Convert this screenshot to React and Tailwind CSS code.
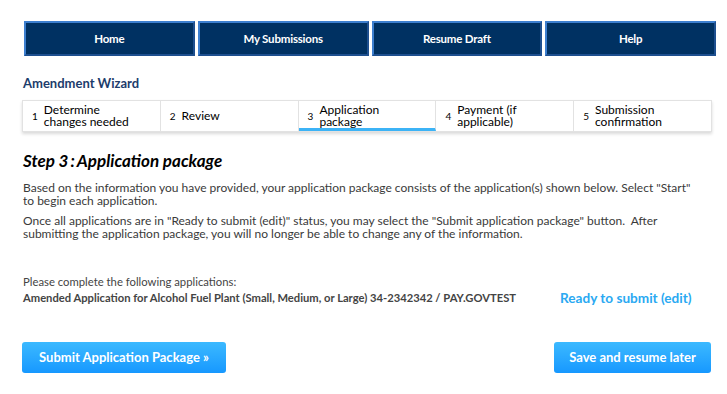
export default function App() {
  const navItems = ["Home", "My Submissions", "Resume Draft", "Help"];
  const steps = [
    ["1", "Determine", "changes needed"],
    ["2", "Review", null],
    ["3", "Application", "package"],
    ["4", "Payment (if", "applicable)"],
    ["5", "Submission", "confirmation"],
  ];
  return (
    <div className="w-[727px] h-[394px] bg-white text-[#333] overflow-hidden" style={{ fontFamily: "Lato, 'Open Sans', sans-serif" }}>
      <div className="flex gap-[3px] pl-[24px] pr-[11px] pt-[21px]">
        {navItems.map((n) => (
          <div key={n} className="flex-1 h-[35px] flex items-center justify-center bg-[#003162] border-2 border-t-[#3d7fcf] border-l-[#3d7fcf] border-r-[#1d4f8f] border-b-[#1d4f8f] text-white text-[11.5px] font-bold tracking-[-0.2px]">
            {n}
          </div>
        ))}
      </div>

      <div className="pl-[23px] pt-[19px] text-[13px] font-bold text-[#1c3c6b] leading-[16px]">Amendment Wizard</div>

      <div className="ml-[22px] mr-[15px] mt-[9px] h-[32px] flex border border-[#e2e2e2] shadow-[0_2px_3px_rgba(0,0,0,0.15)]">
        {steps.map(([num, a, b], i) => (
          <div key={num} className={`flex-1 flex items-center pl-[9px] gap-[6px] ${i < 4 ? "border-r border-[#e2e2e2]" : ""} ${i === 2 ? "border-b-[3px] border-b-[#3cb3f6] pt-[3px]" : ""}`}>
            <span className="text-[10px] text-black">{num}</span>
            <span className="text-[12px] leading-[12px] text-black">
              {a}
              {b && <br />}
              {b}
            </span>
          </div>
        ))}
      </div>

      <div className="pl-[23px] pt-[19px] text-[17px] font-bold italic text-black leading-[20px]">Step 3&#8201;:&#8201;Application package</div>

      <div className="pl-[23px] pt-[10px] text-[12px] leading-[13px] text-[#3a3a3a] whitespace-nowrap">
        <p>Based on the information you have provided, your application package consists of the application(s) shown below. Select "Start"<br />to begin each application.</p>
        <p className="mt-[7px]">Once all applications are in "Ready to submit (edit)" status, you may select the "Submit application package" button.&nbsp; After<br />submitting the application package, you will no longer be able to change any of the information.</p>
      </div>

      <div className="pl-[23px] pt-[35px] text-[11.3px] text-[#444] leading-[13px]">Please complete the following applications:</div>
      <div className="flex items-center pl-[23px] pt-[3px] leading-[14px]">
        <div className="w-[537px] text-[11.2px] font-bold text-[#444] whitespace-nowrap">Amended Application for Alcohol Fuel Plant (Small, Medium, or Large) 34-2342342 / PAY.GOVTEST</div>
        <div className="text-[13.6px] font-bold text-[#2aa9f2] whitespace-nowrap">Ready to submit (edit)</div>
      </div>

      <div className="flex justify-between pl-[22px] pr-[16px] pt-[37px]">
        <button className="h-[31px] w-[204px] rounded-[3px] bg-gradient-to-b from-[#3bb9ff] to-[#1698ff] text-white text-[13px] font-bold">Submit Application Package »</button>
        <button className="h-[31px] w-[157px] rounded-[3px] bg-gradient-to-b from-[#3bb9ff] to-[#1698ff] text-white text-[13px] font-bold">Save and resume later</button>
      </div>
    </div>
  );
}
